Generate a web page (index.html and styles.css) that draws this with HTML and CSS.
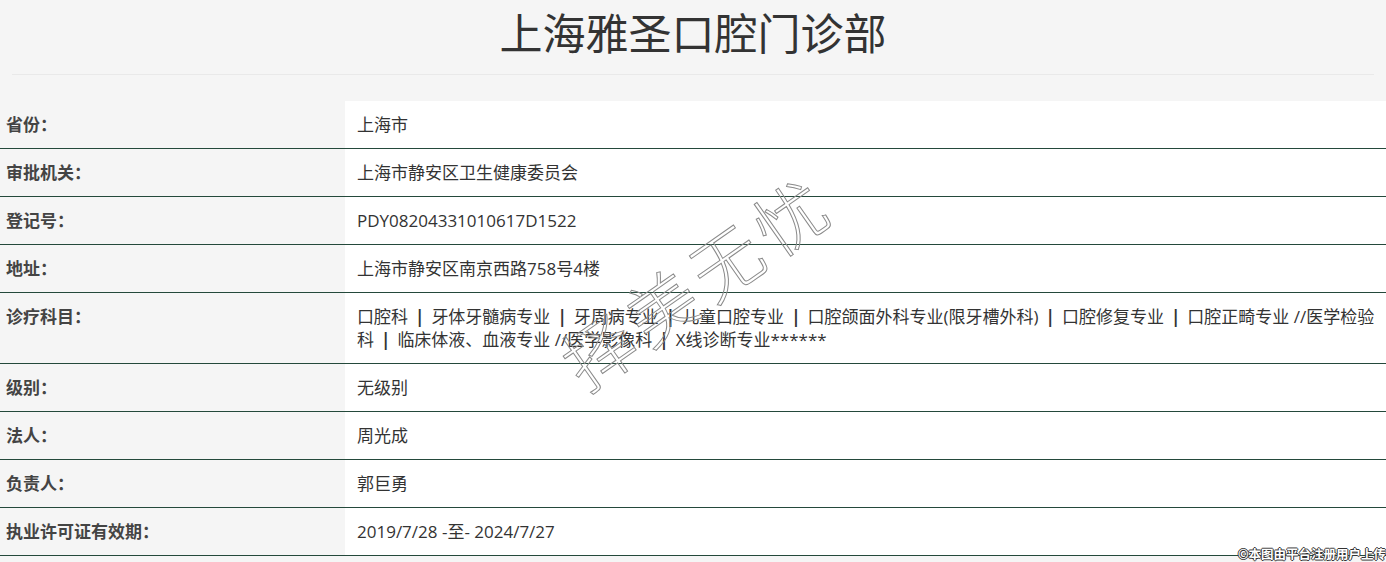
FILE: index.html
```html
<!DOCTYPE HTML>
<html>
    <head>
        <title>上海雅圣口腔门诊部</title>
        <meta charset="utf-8">
        <link rel="stylesheet" href="styles.css">
    </head>
    <body>
        <div class="page">
            <h1 class="title">上海雅圣口腔门诊部</h1>
            <div class="title-rule"></div>
            <table class="info">
                <tr><th>省份：</th><td>上海市</td></tr>
                <tr><th>审批机关：</th><td>上海市静安区卫生健康委员会</td></tr>
                <tr><th>登记号：</th><td>PDY08204331010617D1522</td></tr>
                <tr><th>地址：</th><td>上海市静安区南京西路758号4楼</td></tr>
                <tr><th>诊疗科目：</th><td>口腔科<span class="sep">|</span>牙体牙髓病专业<span class="sep">|</span>牙周病专业<span class="sep">|</span>儿童口腔专业<span class="sep">|</span>口腔颌面外科专业(限牙槽外科)<span class="sep">|</span>口腔修复专业<span class="sep">|</span>口腔正畸专业 //医学检验科<span class="sep">|</span>临床体液、血液专业 //医学影像科<span class="sep">|</span>X线诊断专业******</td></tr>
                <tr><th>级别：</th><td>无级别</td></tr>
                <tr><th>法人：</th><td>周光成</td></tr>
                <tr><th>负责人：</th><td>郭巨勇</td></tr>
                <tr><th>执业许可证有效期：</th><td>2019/7/28 -至- 2024/7/27</td></tr>
            </table>
            <!-- watermark over the table -->
            <div class="watermark">择美无忧</div>
        </div>
        <div class="credit">©本图由平台注册用户上传</div>
    </body>
</html>
```

FILE: styles.css
```css
*
{
    box-sizing: border-box;
}
body
{
    margin: 0px;
    padding: 0px;
    background-color: #f5f5f5;
    font-family: "Open Sans", "Noto Sans CJK SC", sans-serif;
    color: #333;
    overflow: hidden;
}
.page
{
    position: relative;
}
.title
{
    margin: 0;
    height: 62px;
    line-height: 62px;
    font-size: 43px;
    font-weight: normal;
    text-align: center;
    color: #333;
    font-family: "Noto Sans CJK SC", sans-serif;
}
.title-rule
{
    margin: 12px 12px 0 12px;
    height: 1px;
    background-color: #e9e9e9;
}
.info
{
    margin-top: 26px;
    width: 100%;
    border-collapse: collapse;
    font-size: 17px;
}
.info th
{
    width: 345px;
    padding: 12px 6px;
    line-height: 23px;
    text-align: left;
    vertical-align: top;
    font-weight: bold;
    color: #444;
    background-color: #f5f5f5;
    border-bottom: 1px solid #24493b;
}
.info td
{
    padding: 12px 2px 12px 12px;
    line-height: 23px;
    vertical-align: top;
    background-color: #fff;
    border-bottom: 1px solid #24493b;
}
.sep
{
    margin: 0 7px;
    font-weight: bold;
    color: #333;
}
.watermark
{
    position: absolute;
    left: 696px;
    top: 280px;
    font-size: 70px;
    line-height: 1;
    white-space: nowrap;
    font-family: "Noto Sans CJK SC", sans-serif;
    font-weight: 300;
    letter-spacing: 8px;
    color: transparent;
    -webkit-text-stroke: 1px #8a8a8a;
    transform: translate(-50%, -50%) rotate(-35deg);
    pointer-events: none;
}
.credit
{
    position: absolute;
    right: 0;
    top: 545px;
    font-size: 12.5px;
    line-height: 18px;
    font-weight: bold;
    font-family: "Noto Sans CJK SC", sans-serif;
    color: #fff;
    text-shadow: -1px 0 #333, 1px 0 #333, 0 -1px #333, 0 1px #333;
}
```
